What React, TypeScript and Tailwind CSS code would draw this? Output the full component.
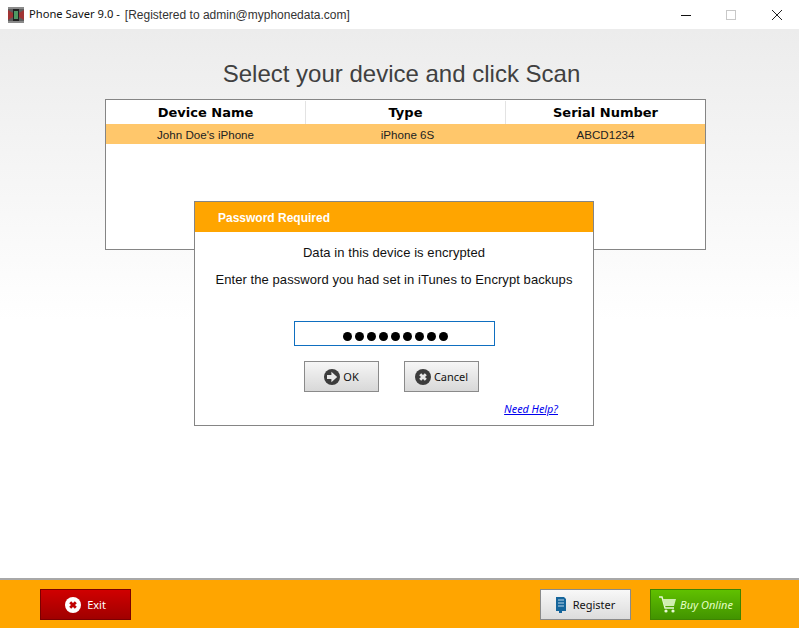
import React from "react";

const Arrow = () => (
  <svg width="16" height="16" viewBox="0 0 16 16" className="shrink-0">
    <circle cx="8" cy="8" r="8" fill="#3c3c3c" />
    <path d="M3 6h4.4V2.8L13.2 8l-5.8 5.2V10H3z" fill="#e8e8e8" />
  </svg>
);
const XCircle = ({ bg, fg, size = 16 }: { bg: string; fg: string; size?: number }) => (
  <svg width={size} height={size} viewBox="0 0 16 16" className="shrink-0">
    <circle cx="8" cy="8" r="8" fill={bg} />
    <path d="M5.2 5.2l5.6 5.6M10.8 5.2l-5.6 5.6" stroke={fg} strokeWidth="2.8" />
  </svg>
);

export default function App() {
  return (
    <div className="relative flex h-[628px] w-[799px] flex-col overflow-hidden bg-white font-['Liberation_Sans',sans-serif]">
      {/* Title bar */}
      <div className="flex h-[29px] shrink-0 items-center bg-white pl-2">
        <svg width="16" height="16" viewBox="0 0 16 16" className="shrink-0">
          <rect width="16" height="16" fill="#5e5e5e" />
          <path d="M0 3l5 3v4l-5 3zM16 3l-5 3v4l5 3z" fill="#a03434" />
          <rect x="5" y="1" width="6" height="14" fill="#222" />
          <rect x="6" y="4" width="4" height="8" fill="#4f9a63" />
          <path d="M0 0h16v2H0zM0 14h16v2H0z" fill="#8a8a8a" />
        </svg>
        <span className="ml-[5px] font-['Noto_Sans',sans-serif] text-[11.2px] text-[#111]">Phone Saver 9.0 -</span>
        <span className="ml-[5px] text-[12px] text-[#333]">[Registered to admin@myphonedata.com]</span>
        <div className="ml-auto flex items-center">
          <svg width="12" height="12" viewBox="0 0 12 12" className="mr-[33px]"><path d="M1 6.5h10" stroke="#111" strokeWidth="1" /></svg>
          <svg width="12" height="12" viewBox="0 0 12 12" className="mr-[34px]"><rect x="1.5" y="1.5" width="9" height="9" fill="none" stroke="#c8c8c8" /></svg>
          <svg width="12" height="12" viewBox="0 0 12 12" className="mr-[16px]"><path d="M1 1l10 10M11 1L1 11" stroke="#222" strokeWidth="1" /></svg>
        </div>
      </div>

      {/* Main */}
      <div className="flex flex-1 flex-col items-center bg-gradient-to-b from-[#ececec] from-[0%] to-white to-[53%] pl-[12px]">
        <h1 className="mt-[28px] mr-[8px] h-[42px] text-[24px] leading-[33px] font-normal text-[#404040]">Select your device and click Scan</h1>
        <div className="h-[151px] w-[601px] border border-[#858585] bg-white">
          <div className="grid h-[24px] grid-cols-[200px_200px_1fr] pt-[1px] font-['DejaVu_Sans',sans-serif] text-[13px] font-bold text-black">
            <div className="flex items-center justify-center border-r border-[#e3e3e3]">Device Name</div>
            <div className="flex items-center justify-center border-r border-[#e3e3e3]">Type</div>
            <div className="flex items-center justify-center">Serial Number</div>
          </div>
          <div className="grid h-[20px] grid-cols-[200px_200px_1fr] bg-[#ffc76b] pt-[1px] text-[11.6px] text-[#222]">
            <div className="flex items-center justify-center pr-[1px]">John Doe's iPhone</div>
            <div className="flex items-center justify-center pl-[3px]">iPhone 6S</div>
            <div className="flex items-center justify-center">ABCD1234</div>
          </div>
        </div>
      </div>

      {/* Footer */}
      <div className="flex h-[50px] shrink-0 items-center border-t-2 border-[#a8a8a8] bg-[#ffa500] pt-[1px] pr-[58px] pl-[40px]">
        <button className="flex h-[31px] w-[91px] items-center justify-center gap-[6px] border border-[#7c0000] bg-gradient-to-b from-[#d00000] to-[#a00000] font-['Noto_Sans',sans-serif] text-[11px] text-white">
          <XCircle bg="#ffffff" fg="#c00000" />
          <span className="pt-[1px]">Exit</span>
        </button>
        <button className="ml-auto flex h-[31px] w-[91px] items-center justify-center gap-[7px] border border-[#8a8a8a] bg-gradient-to-b from-[#f8f8f8] to-[#dcdcdc] font-['Noto_Sans',sans-serif] text-[11px] text-[#111]">
          <svg width="10" height="18" viewBox="0 0 10 18" className="shrink-0">
            <path d="M0 1h8l2 2v12H6v2H3v-2H0z" fill="#15659b" />
            <path d="M2 4h6M2 7h6M2 10h6" stroke="#bcd6e8" strokeWidth="1" />
          </svg>
          <span className="pt-[1px]">Register</span>
        </button>
        <button className="ml-[19px] flex h-[31px] w-[91px] items-center justify-center gap-[3px] border border-[#3f8400] bg-gradient-to-b from-[#60c000] to-[#429400] font-['Noto_Sans',sans-serif] text-[11px] text-[#e4ffc4] italic">
          <svg width="19" height="19" viewBox="0 0 19 19" className="shrink-0">
            <path d="M1 2h3l3 11h9" fill="none" stroke="#e8f8d8" strokeWidth="1.4" />
            <path d="M4.6 4H18l-2 7H6.5z" fill="#cfeeb0" />
            <circle cx="8" cy="16" r="1.6" fill="#e8f8d8" />
            <circle cx="15" cy="16" r="1.6" fill="#e8f8d8" />
          </svg>
          <span className="pt-[1px]">Buy Online</span>
        </button>
      </div>

      {/* Dialog */}
      <div className="absolute top-[201px] left-[194px] flex h-[225px] w-[400px] flex-col border border-[#858585] bg-white">
        <div className="flex h-[30px] shrink-0 items-center bg-[#ffa500] pt-[1px] pl-[23px] text-[12px] font-bold text-[#fff]">Password Required</div>
        <p className="mt-[14px] text-center text-[13px] leading-[14px] tracking-[0.07px] text-[#111]">Data in this device is encrypted</p>
        <p className="mt-[13px] text-center text-[13px] leading-[14px] tracking-[0.07px] text-[#111]">Enter the password you had set in iTunes to Encrypt backups</p>
        <div className="mt-[34px] flex justify-center">
          <div className="flex h-[25px] w-[201px] items-center justify-center gap-[3px] border border-[#0f6fc0] bg-white pt-[5px] pl-[3px]">
            {Array.from({ length: 9 }).map((_, i) => (
              <span key={i} className="h-[9px] w-[9px] rounded-full bg-black" />
            ))}
          </div>
        </div>
        <div className="mt-[15px] ml-[109px] flex gap-[25px]">
          <button className="flex h-[31px] w-[75px] items-center justify-center gap-[3px] border border-[#8a8a8a] bg-gradient-to-b from-[#f6f6f6] to-[#d8d8d8] font-['Noto_Sans',sans-serif] text-[11px] text-[#111]">
            <Arrow />
            <span className="pt-[1px]">OK</span>
          </button>
          <button className="flex h-[31px] w-[75px] items-center justify-center gap-[3px] border border-[#8a8a8a] bg-gradient-to-b from-[#f6f6f6] to-[#d8d8d8] font-['Noto_Sans',sans-serif] text-[11px] text-[#111]">
            <XCircle bg="#3c3c3c" fg="#e8e8e8" />
            <span className="pt-[1px]">Cancel</span>
          </button>
        </div>
        <div className="mt-[4px] pr-[35px] text-right">
          <a className="font-['Noto_Sans',sans-serif] text-[10.8px] text-[#0000ee] italic underline">Need Help?</a>
        </div>
      </div>
    </div>
  );
}
